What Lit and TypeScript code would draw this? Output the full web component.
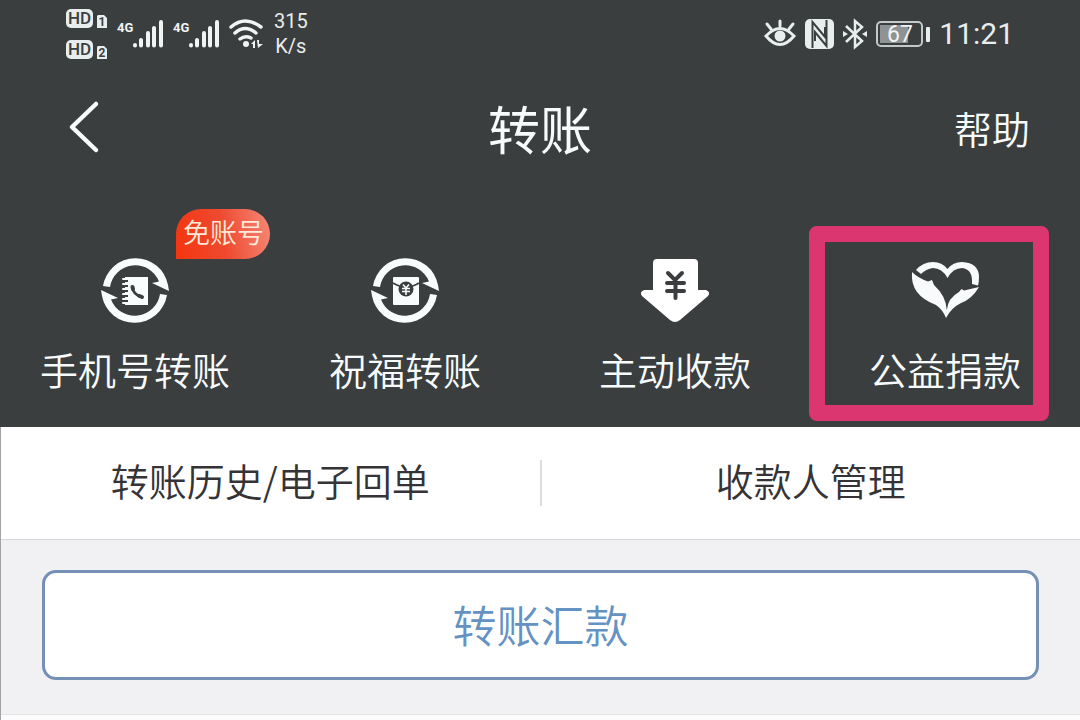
import { LitElement, html, css, svg } from "lit";
import { customElement } from "lit/decorators.js";

const arrow = "M2 29A33 33 0 0 1 67 28L68 34L51 26L58 24.500A25.500 25.500 0 0 0 9 30Z";
const ring = svg`
  <path fill="#f8fcfc" d=${arrow}/>
  <path fill="#f8fcfc" transform="rotate(180 34 33.500)" d=${arrow}/>`;

const phoneIcon = html`
  <svg class="glyph" viewBox="0 0 68 68" aria-hidden="true">
    ${ring}
    <path fill="#f8fcfc" d="M24 20H47V48H24Z"/>
    <path fill="none" stroke="#3b3e3f" stroke-width="2" d="M22 24H27M22 29H27M22 34H27M22 39H27M22 44H27"/>
    <path fill="none" stroke="#f8fcfc" stroke-width="2" stroke-linecap="round" d="M22 22H25M22 27H25M22 32H25M22 37H25M22 42H25M22 46H25"/>
    <path fill="none" stroke="#3b3e3f" stroke-width="2.500" d="M31 29Q32 38 41 40"/>
    <path fill="none" stroke="#3b3e3f" stroke-width="4" stroke-linecap="round" d="M31.500 30L32 32M38.500 39L41 40"/>
  </svg>`;

const blessIcon = html`
  <svg class="glyph" viewBox="0 0 68 68" aria-hidden="true">
    ${ring}
    <rect x="22" y="20" width="26" height="28" rx="1" fill="#f8fcfc"/>
    <path fill="none" stroke="#3b3e3f" stroke-width="2" d="M22 26Q35 34 48 26"/>
    <circle cx="35" cy="32" r="7.500" fill="#3b3e3f"/>
    <path fill="none" stroke="#f8fcfc" stroke-width="1.600" d="M32 27.500L35 31L38 27.500M31 31.500H39M31 34.500H39M35 31V38"/>
  </svg>`;

const collectIcon = html`
  <svg class="glyph" viewBox="0 0 68 68" aria-hidden="true">
    <path fill="#fff" d="M16 2H53Q57 2 57 6V33H65Q70 35 67 39L39 63Q34 67 29 63L1 39Q-2 35 3 33H12V6Q12 2 16 2Z"/>
    <path fill="none" stroke="#3b3e3f" stroke-width="4" stroke-linecap="round" d="M27 16L34 23L41 16M26 26H43M26 34H43M34.500 24V41"/>
  </svg>`;

const heartIcon = html`
  <svg class="glyph" viewBox="0 0 68 68" aria-hidden="true">
    <path fill="#f8fafc" d="M5 13Q12 5 22 5Q31 5 36.500 12Q42 5 51 5Q68 6 68 20Q68 25 67 28.500L61 27Q62 12 51 11Q42 11 36.500 21Q31 11 22 11Q15 12 10 17Z"/>
    <path fill="#f8fafc" d="M1 15Q7 21 17 24.500L21 23L23 28Q35 39 35.800 53Q37 41 48 35L50.500 32L53 33.500L68 30Q61 42 50 46Q40 51 35 61Q32 53 25 48Q12 43 6 35Q0 27 1 15Z"/>
  </svg>`;

const signal = html`
  <svg width="46" height="30" viewBox="0 0 46 30" aria-hidden="true">
    <text class="net" x="-1" y="13">4G</text>
    <path fill="none" stroke="#f0f4f4" stroke-width="4" stroke-linecap="round" d="M17 26V26.500M23 21V26.500M30 14V26.500M36 9V26.500M43 3V26.500"/>
  </svg>`;

const hd = (n: number) => html`
  <svg width="42" height="20" viewBox="0 0 42 20" aria-hidden="true">
    <rect x="0" y="0" width="27" height="19" rx="5" fill="#e8eded"/>
    <text class="hd" x="13.500" y="15" text-anchor="middle">HD</text>
    <path fill="#e8eded" d="M32 6H38L41 9V19H31V7Z"/>
    <text class="sim" x="36" y="17" text-anchor="middle">${n}</text>
  </svg>`;

@customElement("app-root")
export class AppRoot extends LitElement {
  static styles = css`
    :host {
      display: block;
      min-height: 100vh;
      background: #fdfcfd;
      color: #f8fbfb;
      font-family: "Noto Sans CJK SC", sans-serif;
      font-weight: 350;
    }
    * { box-sizing: border-box; }
    svg { display: block; flex: none; overflow: visible; }
    button, a { font: inherit; color: inherit; text-decoration: none; }
    button { border: 0; background: none; padding: 0; cursor: pointer; }
    .page {
      min-height: 100vh;
      border-left: 1px solid #a3a3a5;
    }
    .top { background: #3b3e3f; padding-bottom: 32px; margin-left: -1px; }
    .status {
      display: flex;
      align-items: center;
      justify-content: space-between;
      height: 68px;
      padding: 0 66px;
      font-family: Roboto, sans-serif;
      font-weight: 400;
      color: #e8eded;
    }
    .side { display: flex; align-items: center; gap: 10px; }
    .state { gap: 9px; }
    .cards { display: flex; flex-direction: column; gap: 11px; }
    .rate { font-size: 20px; line-height: 25px; text-align: center; }
    .clock { font-size: 30px; line-height: 36px; }
    .hd { font: 500 17px Roboto, sans-serif; fill: #3b3e3f; }
    .sim { font: 700 12px Roboto, sans-serif; fill: #3b3e3f; }
    .net { font: 700 13px Roboto, sans-serif; fill: #f0f4f4; }
    .pct { font: 400 23px Roboto, sans-serif; fill: #f0f4f4; }
    .nav {
      display: grid;
      grid-template-columns: 1fr auto 1fr;
      align-items: center;
      height: 120px;
      padding: 0 50px;
    }
    .title { margin: 0; font-size: 52px; line-height: 60px; font-weight: 400; }
    .back { justify-self: start; padding-left: 18px; }
    .help { justify-self: end; font-size: 38px; line-height: 48px; }
    .grid { display: grid; grid-template-columns: repeat(4, 1fr); padding-top: 69px; }
    .entry {
      position: relative;
      display: flex;
      flex-direction: column;
      align-items: center;
      gap: 18px;
      font-size: 38px;
      line-height: 52px;
      white-space: nowrap;
    }
    .glyph { width: 68px; height: 68px; }
    .badge {
      position: absolute;
      left: calc(50% + 41px);
      top: -48px;
      padding: 0 6px 4px 7px;
      border-radius: 25px 25px 25px 0;
      background: linear-gradient(80deg, #f4350f, #ee4a30 50%, #f58878);
      color: #ffe9d8;
      font-size: 27px;
      line-height: 46px;
    }
    .mark {
      position: absolute;
      left: calc(50% - 136px);
      top: -31px;
      width: 240px;
      height: 195px;
      border: 16px solid #dc3670;
      border-radius: 8px;
      pointer-events: none;
    }
    .links {
      display: grid;
      grid-template-columns: 1fr 2px 1fr;
      align-items: center;
      height: 113px;
      background: #fff;
      border-bottom: 1px solid #d8d6d9;
      color: #353335;
      font-size: 38px;
      line-height: 52px;
      text-align: center;
    }
    .links a { padding-bottom: 6px; }
    .rule { height: 46px; background: #dcdcde; }
    .action { padding: 30px 41px 34px; background: #f1f0f2; border-bottom: 1px solid #e6e4e6; }
    .send {
      display: block;
      width: 100%;
      height: 110px;
      padding-bottom: 2px;
      border: 3px solid #7490b4;
      border-radius: 14px;
      background: #fff;
      color: #6492c2;
      font-size: 44px;
      line-height: 60px;
    }
  `;

  render() {
    return html`
      <div class="page">
        <header class="top">
          <div class="status">
            <div class="side">
              <div class="cards">${hd(1)}${hd(2)}</div>
              ${signal}${signal}
              <svg width="34" height="30" viewBox="0 0 34 30" aria-hidden="true">
                <g fill="none" stroke="#f0f4f4" stroke-width="3.500" stroke-linecap="round">
                  <path d="M1 8Q15 -4 31 8M5 14Q15 5 26 14M10 20Q15 16 21 19"/>
                </g>
                <circle cx="16" cy="25" r="3" fill="#f0f4f4"/>
                <path fill="#f0f4f4" d="M21 25L25 21V29H23V25ZM27 21H29V25H33L28 29Z"/>
              </svg>
              <div class="rate">315<br />K/s</div>
            </div>
            <div class="side state">
              <svg width="32" height="30" viewBox="0 0 32 30" aria-hidden="true">
                <path fill="none" stroke="#e8eded" stroke-width="3" stroke-linecap="round" d="M2 17Q16 2 30 17Q16 34 2 17ZM16 7V2M7 10L3 5M25 10L29 5"/>
                <circle cx="16" cy="17" r="5.500" fill="#e8eded"/>
              </svg>
              <svg width="29" height="30" viewBox="0 0 29 30" aria-hidden="true">
                <rect width="29" height="30" rx="5" fill="#e8eded"/>
                <path fill="none" stroke="#3b3e3f" stroke-width="2" d="M7.500 29V3L20 18V8M21.500 1V27L10 13V22"/>
              </svg>
              <svg width="24" height="30" viewBox="0 0 24 30" aria-hidden="true">
                <path fill="none" stroke="#e8eded" stroke-width="2.500" d="M3 7L19 22L12 28V2L19 8L3 23"/>
                <path fill="#e8eded" d="M0 12L5 15L0 18ZM24 12L19 15L24 18Z"/>
              </svg>
              <svg width="54" height="26" viewBox="0 0 54 26" role="img" aria-label="67%">
                <rect x="1" y="1" width="45" height="24" rx="4" fill="none" stroke="#c4c8c8" stroke-width="2"/>
                <rect x="4" y="4" width="28" height="18" fill="#8f9293"/>
                <text class="pct" x="24" y="21" text-anchor="middle">67</text>
                <rect x="50" y="6" width="4" height="15" rx="1" fill="#e8eded"/>
              </svg>
              <span class="clock">11:21</span>
            </div>
          </div>
          <nav class="nav">
            <button class="back" type="button" aria-label="返回">
              <svg width="32" height="52" viewBox="0 0 32 52" aria-hidden="true">
                <path fill="none" stroke="#f8fbfb" stroke-width="4.500" stroke-linecap="round" stroke-linejoin="round" d="M28 2L4 25L28 48"/>
              </svg>
            </button>
            <h1 class="title">转账</h1>
            <a class="help" href="#help">帮助</a>
          </nav>
          <div class="grid">
            <a class="entry" href="#phone">${phoneIcon}<span>手机号转账</span><span class="badge">免账号</span></a>
            <a class="entry" href="#bless">${blessIcon}<span>祝福转账</span></a>
            <a class="entry" href="#collect">${collectIcon}<span>主动收款</span></a>
            <a class="entry" href="#donate">${heartIcon}<span>公益捐款</span><span class="mark"></span></a>
          </div>
        </header>
        <div class="links">
          <a href="#history">转账历史/电子回单</a>
          <span class="rule"></span>
          <a href="#payees">收款人管理</a>
        </div>
        <section class="action">
          <button class="send" type="button">转账汇款</button>
        </section>
      </div>
    `;
  }
}
